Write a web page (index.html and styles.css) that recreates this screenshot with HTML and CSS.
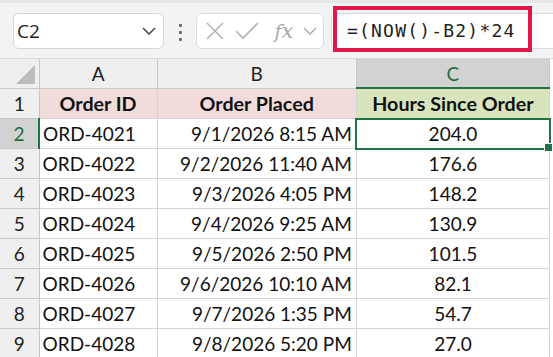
FILE: index.html
```html
<!DOCTYPE html>
<html>
<head>
<meta charset="utf-8">
<link rel="stylesheet" href="styles.css">
</head>
<body>
<div class="app">
  <div class="topbar">
    <div class="namebox">
      <span class="nb-text">C2</span>
      <svg class="chev" width="14" height="8" viewBox="0 0 14 8"><path d="M1 1 L7 7 L13 1" fill="none" stroke="#444" stroke-width="1.5"/></svg>
    </div>
    <div class="dots"><i></i><i></i><i></i></div>
    <div class="fbtns">
      <svg width="20" height="20" viewBox="0 0 20 20"><path d="M2 2 L18 18 M18 2 L2 18" stroke="#b4b4b4" stroke-width="1.6" fill="none"/></svg>
      <svg width="24" height="20" viewBox="0 0 24 20"><path d="M1 10 L8 17 L23 2" stroke="#b4b4b4" stroke-width="1.6" fill="none"/></svg>
      <span class="fx">f<span class="fxx">x</span></span>
      <svg width="14" height="8" viewBox="0 0 14 8"><path d="M1 1 L7 7 L13 1" fill="none" stroke="#a8a8a8" stroke-width="1.4"/></svg>
    </div>
    <div class="formula">=(NOW()-B2)*24</div>
    <div class="highlight"></div>
  </div>
  <table class="sheet">
    <colgroup>
      <col class="c-rh"><col class="c-a"><col class="c-b"><col class="c-c">
    </colgroup>
    <tr class="colhdr">
      <th class="corner"><span class="tri"></span></th>
      <th>A</th><th>B</th><th class="sel">C</th>
    </tr>
    <tr class="hdr">
      <th class="rh">1</th>
      <td class="pink">Order ID</td><td class="pink">Order Placed</td><td class="green">Hours Since Order</td>
    </tr>
    <tr>
      <th class="rh selrow">2</th>
      <td class="l">ORD-4021</td><td class="r">9/1/2026 8:15 AM</td><td class="c active">204.0<span class="handle"></span></td>
    </tr>
    <tr><th class="rh">3</th><td class="l">ORD-4022</td><td class="r">9/2/2026 11:40 AM</td><td class="c">176.6</td></tr>
    <tr><th class="rh">4</th><td class="l">ORD-4023</td><td class="r">9/3/2026 4:05 PM</td><td class="c">148.2</td></tr>
    <tr><th class="rh">5</th><td class="l">ORD-4024</td><td class="r">9/4/2026 9:25 AM</td><td class="c">130.9</td></tr>
    <tr><th class="rh">6</th><td class="l">ORD-4025</td><td class="r">9/5/2026 2:50 PM</td><td class="c">101.5</td></tr>
    <tr><th class="rh">7</th><td class="l">ORD-4026</td><td class="r">9/6/2026 10:10 AM</td><td class="c">82.1</td></tr>
    <tr><th class="rh">8</th><td class="l">ORD-4027</td><td class="r">9/7/2026 1:35 PM</td><td class="c">54.7</td></tr>
    <tr><th class="rh">9</th><td class="l">ORD-4028</td><td class="r">9/8/2026 5:20 PM</td><td class="c">27.0</td></tr>
  </table>
</div>
</body>
</html>
```
FILE: styles.css
```css
html, body { margin: 0; padding: 0; }
body { width: 553px; height: 357px; overflow: hidden; background: #fff; }
.app { position: relative; width: 553px; height: 357px; overflow: hidden; }

.topbar {
  position: relative;
  height: 59px;
  background: #f3f3f3;
  border-top: 3px solid #e6e6e6;
  box-sizing: border-box;
  display: flex;
  align-items: flex-start;
  padding: 10px 0 0 13px;
  border-bottom: 1px solid #dadada;
}
.topbar > * { flex-shrink: 0; }
.namebox {
  width: 151px; height: 36px; box-sizing: border-box;
  background: #fff; border: 1px solid #d6d6d6; border-radius: 6px;
  display: flex; align-items: center; justify-content: space-between;
  padding: 0 7px 0 3px;
}
.nb-text { font-family: "Open Sans", sans-serif; font-size: 19px; color: #1f1f1f; }
.dots { width: 32px; display: flex; flex-direction: column; align-items: center; gap: 4px; padding-top: 11px; }
.dots i { display: block; width: 3px; height: 3px; background: #666; border-radius: 1px; }
.fbtns {
  width: 128px; height: 36px; box-sizing: border-box;
  background: #fff; border: 1px solid #dcdcdc; border-radius: 6px;
  display: flex; align-items: center; padding: 0 6px 0 8px;
  justify-content: space-between;
}
.fx { font-family: "DejaVu Serif", serif; font-style: italic; font-size: 19px; color: #a8a8a8; margin-left: 6px; }
.fxx { font-size: 21px; }
.formula {
  margin-left: 7px;
  width: 240px; height: 36px; box-sizing: border-box;
  background: #fff; border: 1px solid #dcdcdc; border-radius: 6px;
  font-family: "DejaVu Sans Mono", monospace; font-size: 18px; letter-spacing: 1.2px;
  color: #1f1f1f; padding: 6px 0 0 15px; white-space: nowrap;
}
.highlight {
  position: absolute; left: 333px; top: 3px;
  width: 199px; height: 46px; box-sizing: border-box;
  border: 4px solid #e0174a;
}

.sheet {
  border-collapse: collapse;
  table-layout: fixed;
  width: 550px;
  font-family: Lato, "Carlito", sans-serif;
  font-size: 19px;
  color: #111;
}
.c-rh { width: 39px; }
.c-a { width: 118px; }
.c-b { width: 199px; }
.c-c { width: 193px; }
.sheet th, .sheet td { border: 1px solid #d4d4d4; padding: 0; height: 29px; white-space: nowrap; overflow: visible; }
.colhdr th {
  height: 28px; background: #efefef; font-weight: normal; color: #222;
  border-color: #c8c8c8; border-top: none; font-size: 19px;
}
.colhdr th.sel { background: #d2d2d2; color: #1e6e42; border-bottom: 2px solid #217346; }
.corner { position: relative; border-left: none !important; }
.tri {
  position: absolute; right: 4px; bottom: 4px; width: 0; height: 0;
  border-left: 19px solid transparent; border-bottom: 19px solid #bdbdbd;
}
.rh { background: #efefef; font-weight: normal; color: #222; border-color: #c8c8c8 !important; border-left: none !important; }
.rh.selrow { background: #d2d2d2; color: #1e6e42; border-right: 2px solid #217346 !important; }
.hdr td { font-weight: bold; text-align: center; font-size: 19.7px; }
.pink { background: #f2dcdb; }
.green { background: #d8e4bc; }
.l { text-align: left; padding-left: 3px !important; }
.r { text-align: right; padding-right: 4px !important; }
.c { text-align: center; }
.active { position: relative; outline: 2px solid #217346; outline-offset: -1px; }
.handle { position: absolute; right: -4px; bottom: -4px; width: 7px; height: 7px; background: #217346; border: 1px solid #fff; }
```
